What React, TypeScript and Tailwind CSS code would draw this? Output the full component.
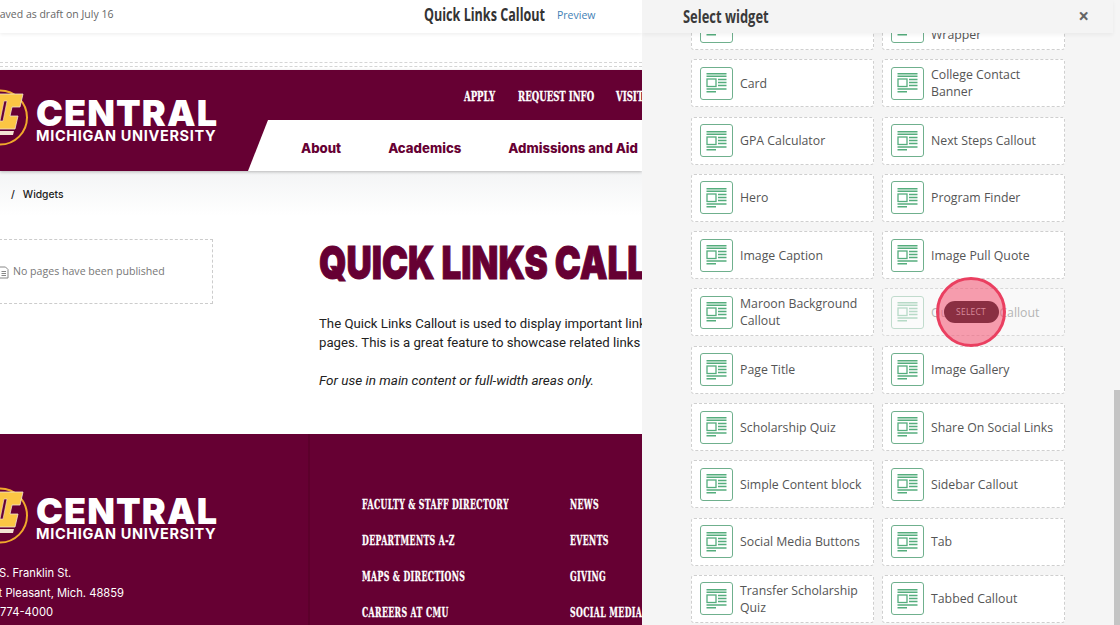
import React from "react";

const leftWidgets = [
  "",
  "Card",
  "GPA Calculator",
  "Hero",
  "Image Caption",
  "Maroon Background Callout",
  "Page Title",
  "Scholarship Quiz",
  "Simple Content block",
  "Social Media Buttons",
  "Transfer Scholarship Quiz",
];

const rightWidgets = [
  "Full Width Content Wrapper",
  "College Contact Banner",
  "Next Steps Callout",
  "Program Finder",
  "Image Pull Quote",
  "Quick Links Callout",
  "Image Gallery",
  "Share On Social Links",
  "Sidebar Callout",
  "Tab",
  "Tabbed Callout",
];

function WidgetIcon() {
  return (
    <div className="w-[33px] h-[33px] shrink-0 rounded-[3px] border border-[#6fb08d] bg-white flex items-center justify-center">
      <svg width="21" height="20" viewBox="0 0 21 20" fill="none" stroke="#55ad7d">
        <path d="M0.5 0.7H20.5M0.5 3.2H20.5" strokeWidth="1.4" />
        <rect x="1" y="6" width="9" height="7.5" strokeWidth="1.3" />
        <path d="M12 6.5H20.5M12 9.5H20.5M12 12.5H20.5M0.5 16H20.5M0.5 18.8H10" strokeWidth="1.4" />
      </svg>
    </div>
  );
}

function WidgetCard({ name, faded }: { name: string; faded?: boolean }) {
  return (
    <div
      className={
        faded
          ? "h-[48px] flex items-center gap-[7px] pl-[8px] pr-[6px] rounded-[3px] border border-dashed border-[#d8d8d8] bg-[#f9f9f9]"
          : "h-[48px] flex items-center gap-[7px] pl-[8px] pr-[6px] rounded-[3px] border border-dashed border-[#cfcfcf] bg-white"
      }
    >
      <div className={faded ? "opacity-40" : ""}>
        <WidgetIcon />
      </div>
      <span className={faded ? "text-[12.3px] leading-[17px] text-[#b5b5b5]" : "text-[12.3px] leading-[17px] text-[#555555]"}>
        {name}
      </span>
    </div>
  );
}

function Logo() {
  return (
    <div className="flex items-center gap-[8px]">
      <svg width="28" height="57" viewBox="0 0 28 57" className="shrink-0">
        <circle cx="0" cy="28.5" r="27" fill="#660033" stroke="#f0a92c" strokeWidth="2" />
        <path d="M-8 42H14L13 46H-8Z" fill="#f3e3d3" />
        <path d="M-2 5H23L20 18H12L10 27H18L15 40H-8Z" fill="#fbc644" stroke="#f3e3d3" strokeWidth="0.8" />
        <path d="M4 12H7L3 32H0Z" fill="#660033" stroke="#f3e3d3" strokeWidth="0.6" />
      </svg>
      <div className="flex flex-col mt-[6px] font-['Inter',sans-serif] text-white">
        <span className="text-[36px] leading-[30px] font-black tracking-[1.1px]">CENTRAL</span>
        <span className="text-[14.5px] leading-[15px] font-bold tracking-[0.65px] whitespace-nowrap">MICHIGAN UNIVERSITY</span>
      </div>
    </div>
  );
}

const footerCols = [
  { w: "w-[208px]", links: ["FACULTY & STAFF DIRECTORY", "DEPARTMENTS A-Z", "MAPS & DIRECTIONS", "CAREERS AT CMU"] },
  { w: "w-[80px]", links: ["NEWS", "EVENTS", "GIVING", "SOCIAL MEDIA"] },
];

export default function App() {
  return (
    <div className="w-[1120px] h-[625px] overflow-hidden flex bg-white font-['Open_Sans',sans-serif] relative">
      {/* page behind the drawer */}
      <div className="w-[642px] h-[625px] shrink-0 overflow-hidden flex flex-col">
        <div className="h-[33px] shrink-0 bg-white shadow-[0_1px_4px_rgba(0,0,0,0.08)] flex items-center z-10">
          <span className="w-[430px] shrink-0 -ml-[6px] text-[10.5px] text-[#666666] whitespace-nowrap pb-[3px]">Saved as draft on July 16</span>
          <span className="text-[17px] font-bold text-[#333333] whitespace-nowrap origin-left scale-x-[0.74] w-[133px] pb-[3px]">Quick Links Callout</span>
          <span className="text-[10.5px] text-[#3f7fb5] pb-[1px]">Preview</span>
        </div>
        <div className="h-[37px] shrink-0 flex flex-col justify-end gap-[3px] pb-[3px]">
          <div className="border-t border-dashed border-[#d5d5d5]" />
          <div className="border-t border-dashed border-[#d5d5d5]" />
        </div>

        <div className="h-[101px] shrink-0 bg-[#660033] flex shadow-[0_1px_3px_rgba(0,0,0,0.25)] z-10">
          <div className="w-[248px] shrink-0 flex items-center -mt-[6px]">
            <Logo />
          </div>
          <div className="flex-1 min-w-0 flex flex-col">
            <div className="h-[50px] pl-[216px] pt-[4px] flex items-center gap-[21px] font-['DejaVu_Serif',serif] font-bold text-[13px] text-white whitespace-nowrap [-webkit-text-stroke:0.3px_#ffffff]">
              <span className="origin-left scale-x-[0.66] w-[33px]">APPLY</span>
              <span className="origin-left scale-x-[0.66] w-[77px]">REQUEST INFO</span>
              <span className="origin-left scale-x-[0.66] w-[26px]">VISIT</span>
            </div>
            <div className="flex-1 bg-white [clip-path:polygon(20px_0,100%_0,100%_100%,0_100%)] pl-[53px] pt-[7px] flex items-center gap-[47px] font-['Inter',sans-serif] font-extrabold text-[13.2px] text-[#660033] whitespace-nowrap">
              <span>About</span>
              <span>Academics</span>
              <span>Admissions and Aid</span>
            </div>
          </div>
        </div>

        <div className="flex-1 min-h-0 bg-gradient-to-b from-[#f3f4f5] to-white to-[45px] flex flex-col">
          <div className="h-[68px] shrink-0 flex items-start pt-[16px] pl-[11px] text-[10.3px] font-['Inter',sans-serif] text-[#222222] font-medium gap-[8px]">
            <span>/</span>
            <span>Widgets</span>
          </div>
          <div className="flex">
            <div className="w-[214px] h-[65px] shrink-0 -ml-px border border-dashed border-[#cccccc] flex items-center gap-[3px] pt-[1px] text-[10.6px] text-[#777777]">
              <span className="w-[10px] shrink-0 overflow-hidden flex justify-end">
                <svg width="13" height="13" viewBox="0 0 13 13" fill="none" stroke="#888888" className="shrink-0">
                  <path d="M2.5 1H8.5L11 3.5V12H2.5Z M4.5 5.5H9M4.5 7.5H9M4.5 9.5H9" />
                </svg>
              </span>
              No pages have been published
            </div>
            <div className="pl-[106px] min-w-0 font-['Roboto',sans-serif] text-[#222222] whitespace-nowrap">
              <div className="h-[46px] font-['Inter',sans-serif] text-[46px] leading-[46px] font-black text-[#660033] origin-left scale-x-[0.76] [-webkit-text-stroke:1px_#660033]">QUICK LINKS CALLOUT</div>
              <p className="mt-[29px] text-[13.2px] leading-[19px]">The Quick Links Callout is used to display important links to other</p>
              <p className="text-[13.2px] leading-[19px]">pages. This is a great feature to showcase related links to users.</p>
              <p className="mt-[19px] text-[13.5px] leading-[19px] italic">For use in main content or full-width areas only.</p>
            </div>
          </div>
        </div>

        <div className="h-[191px] shrink-0 bg-[#660033] flex text-white">
          <div className="w-[310px] shrink-0 border-r-2 border-[#5c002b] pt-[53px]">
            <Logo />
            <div className="mt-[20px] -ml-[8px] font-['Inter',sans-serif] text-[11.2px] leading-[19.7px] whitespace-nowrap">
              <div className="pl-[7px]">S. Franklin St.</div>
              <div>nt Pleasant, Mich. 48859</div>
              <div className="pl-[8px]">774-4000</div>
            </div>
          </div>
          <div className="pl-[52px] pt-[63px] flex font-['DejaVu_Serif',serif] font-bold text-[12px] tracking-[0.6px] whitespace-nowrap [-webkit-text-stroke:0.3px_#ffffff]">
            {footerCols.map((col) => (
              <div key={col.links[0]} className={col.w + " flex flex-col gap-[20px]"}>
                {col.links.map((link) => (
                  <span key={link} className="h-[16px] leading-[16px] origin-left scale-x-[0.65]">{link}</span>
                ))}
              </div>
            ))}
          </div>
        </div>
      </div>

      {/* drawer */}
      <div className="flex-1 h-[625px] bg-[#f5f5f5] flex flex-col overflow-hidden relative">
        <div className="h-[33px] shrink-0 bg-[#f4f4f4] shadow-[0_2px_4px_rgba(0,0,0,0.05)] flex items-center justify-between pl-[41px] pr-[24px] z-10 mr-[7px]">
          <span className="text-[17px] font-bold text-[#3a3a3a] whitespace-nowrap origin-left scale-x-[0.76]">Select widget</span>
          <span className="text-[19px] font-bold leading-none text-[#666666]">×</span>
        </div>
        <div className="-mt-[31px] pl-[49px] pr-[55px] grid grid-cols-2 gap-x-[8px] gap-y-[9.3px]">
          {leftWidgets.map((name, i) => (
            <React.Fragment key={i}>
              <WidgetCard name={name} />
              <WidgetCard name={rightWidgets[i]} faded={i === 5} />
            </React.Fragment>
          ))}
        </div>
        <div className="absolute right-0 top-[390px] bottom-0 w-[6px] bg-[#c4c4c4]" />
      </div>

      {/* click marker over the hovered card */}
      <div className="absolute left-[936px] top-[277px] w-[70px] h-[70px] rounded-full border-[3px] border-[#ea3f60] bg-[#f4506f]/55 flex items-center justify-center">
        <span className="w-[55px] h-[22px] rounded-full bg-[#8a2f42] text-[#d98a9b] text-[8.5px] flex items-center justify-center tracking-[0.2px]">SELECT</span>
      </div>
    </div>
  );
}
